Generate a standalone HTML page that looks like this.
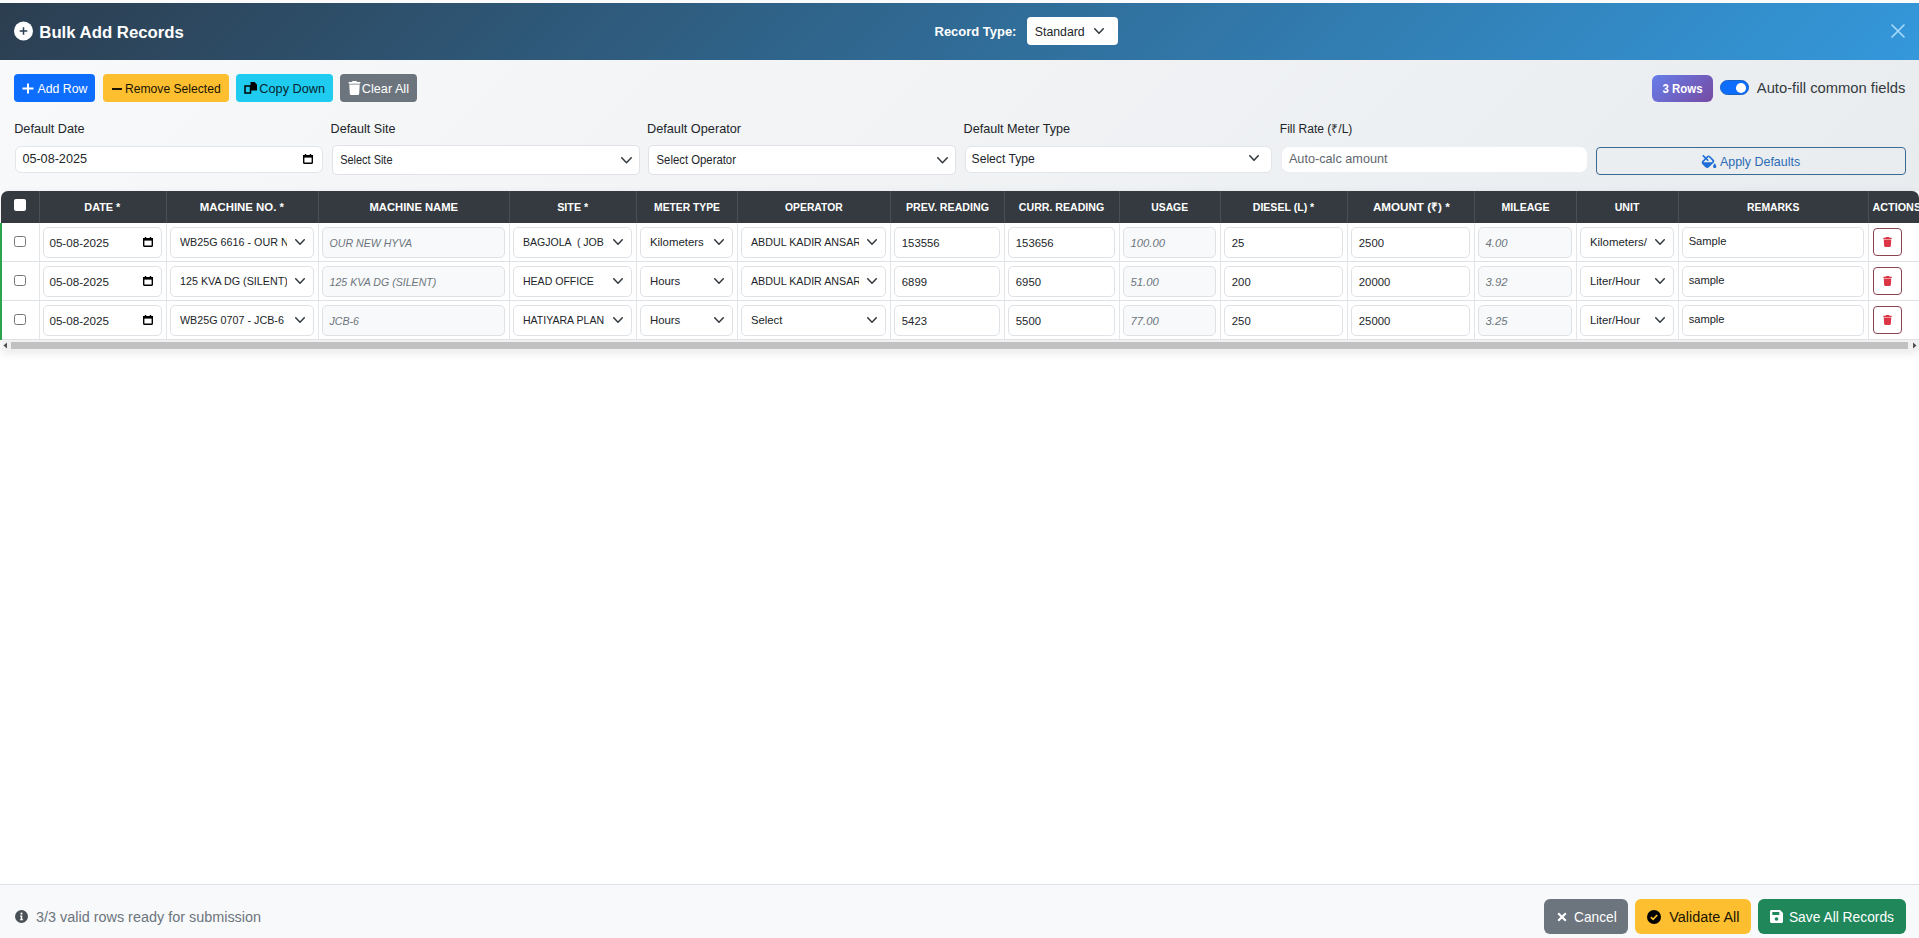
<!DOCTYPE html>
<html><head><meta charset="utf-8"><title>Bulk Add Records</title>
<style>
html,body{margin:0;padding:0;}
body{width:1919px;height:938px;overflow:hidden;position:relative;background:#fff;font-family:"Liberation Sans", sans-serif;}
.b{position:absolute;}
.t{position:absolute;white-space:nowrap;}
svg.b{display:block;}
</style></head><body>
<div class="b" style="left:0px;top:0px;width:1919px;height:3px;background:#fbfbfd;"></div>
<div class="b" style="left:0px;top:3px;width:1919px;height:57px;background:linear-gradient(135deg,#2c3e50 0%,#3498db 100%);"></div>
<svg class="b" style="left:14px;top:21px;" width="19" height="20" viewBox="0 0 19 20"><circle cx="9.5" cy="10" r="9.5" fill="#fff"/><path d="M9.5 6.2V13.8M5.7 10H13.3" stroke="#2c3e50" stroke-width="1.5"/></svg>
<div class="t" style="left:39.29px;top:23px;font-size:16.76px;line-height:20px;color:#fff;font-weight:700;">Bulk Add Records</div>
<div class="t" style="left:934.52px;top:22px;font-size:12.97px;line-height:20px;color:#fff;font-weight:700;">Record Type:</div>
<div class="b" style="left:1027px;top:17px;width:91px;height:28px;background:#fff;border-radius:4px;"></div>
<div class="t" style="left:1034.79px;top:22px;font-size:12.3px;line-height:20px;color:#212529;">Standard</div>
<svg class="b" style="left:1094px;top:28px;" width="10" height="6" viewBox="0 0 10 6"><path d="M0.75 0.75 L5.0 5.25 L9.25 0.75" fill="none" stroke="#343a40" stroke-width="1.5" stroke-linecap="round" stroke-linejoin="round"/></svg>
<svg class="b" style="left:1891px;top:24px;" width="14" height="14" viewBox="0 0 14 14"><path d="M1 1L13 13M13 1L1 13" stroke="#a8dcff" stroke-width="1.6" stroke-linecap="round"/></svg>
<div class="b" style="left:0px;top:60px;width:1919px;height:131px;background:linear-gradient(135deg,#f8f9fa 0%,#e9ecef 100%);"></div>
<div class="b" style="left:14px;top:74px;width:81px;height:28px;background:#0d6efd;border-radius:4px;"></div>
<svg class="b" style="left:22px;top:83px;" width="12" height="11" viewBox="0 0 12 11"><path d="M6 0.5V10.5M0.5 5.5H11.5" stroke="#fff" stroke-width="2"/></svg>
<div class="t" style="left:37.50px;top:79px;font-size:12.32px;line-height:20px;color:#fff;">Add Row</div>
<div class="b" style="left:103px;top:74px;width:126px;height:28px;background:#fdbf30;border-radius:4px;"></div>
<div class="b" style="left:111.5px;top:87.5px;width:10.0px;height:2.0px;background:#1a1400;"></div>
<div class="t" style="left:125.03px;top:79px;font-size:12.13px;line-height:20px;color:#1a1400;">Remove Selected</div>
<div class="b" style="left:236px;top:74px;width:97px;height:28px;background:#1fcbee;border-radius:4px;"></div>
<svg class="b" style="left:244px;top:82px;" width="13" height="12" viewBox="0 0 13 12"><path d="M1 4H6.5V11H1Z" fill="none" stroke="#000" stroke-width="1.5"/><path d="M6.5 0H10.5L13 2.5V8.5H6.5Z" fill="#000"/></svg>
<div class="t" style="left:259.37px;top:79px;font-size:12.7px;line-height:20px;color:#04262e;">Copy Down</div>
<div class="b" style="left:340px;top:74px;width:77px;height:28px;background:#6c757d;border-radius:4px;"></div>
<svg class="b" style="left:347.5px;top:81px;" width="13" height="14" viewBox="0 0 448 512"><path fill="#fff" d="M135.2 17.7L128 32H32C14.3 32 0 46.3 0 64S14.3 96 32 96H416c17.7 0 32-14.3 32-32s-14.3-32-32-32H320l-7.2-14.3C307.4 6.8 296.3 0 284.2 0H163.8c-12.1 0-23.2 6.8-28.6 17.7zM416 128H32L53.2 467c1.6 25.3 22.6 45 47.9 45H346.9c25.3 0 46.3-19.7 47.9-45L416 128z"/></svg>
<div class="t" style="left:361.87px;top:79px;font-size:12.67px;line-height:20px;color:#fff;">Clear All</div>
<div class="b" style="left:1652px;top:75px;width:61px;height:27px;background:linear-gradient(135deg,#667eea 0%,#764ba2 100%);border-radius:6px;"></div>
<div class="t" style="left:1662.57px;top:79px;font-size:11.45px;line-height:20px;color:#fff;transform:scaleY(1.1);transform-origin:0 14px;font-weight:700;">3 Rows</div>
<div class="b" style="left:1720px;top:80px;width:29px;height:15px;background:#0d6efd;border:1px solid #1862c4;box-sizing:border-box;border-radius:8px;"></div>
<div class="b" style="left:1735.5px;top:82.5px;width:10.5px;height:10.0px;background:#fff;border-radius:50%;"></div>
<div class="t" style="left:1756.80px;top:78px;font-size:14.78px;line-height:20px;color:#343a40;">Auto-fill common fields</div>
<div class="t" style="left:14.19px;top:119px;font-size:12.68px;line-height:20px;color:#212529;">Default Date</div>
<div class="t" style="left:330.60px;top:119px;font-size:12.55px;line-height:20px;color:#212529;">Default Site</div>
<div class="t" style="left:646.98px;top:119px;font-size:12.74px;line-height:20px;color:#212529;">Default Operator</div>
<div class="t" style="left:963.59px;top:119px;font-size:12.64px;line-height:20px;color:#212529;">Default Meter Type</div>
<div class="t" style="left:1279.84px;top:119px;font-size:12.04px;line-height:20px;color:#212529;">Fill Rate (&#8377;/L)</div>
<div class="b" style="left:14.5px;top:145.5px;width:308.5px;height:27.0px;background:#fff;border:1px solid #e2e5e9;border-radius:6px;box-sizing:border-box;"></div>
<div class="t" style="left:22.39px;top:149px;font-size:12.64px;line-height:20px;color:#212529;">05-08-2025</div>
<svg class="b" style="left:302.5px;top:154px;" width="10" height="10" viewBox="0 0 10 10"><rect x="0.7" y="1.7" width="8.6" height="7.6" rx="0.8" fill="none" stroke="#000" stroke-width="1.4"/><rect x="0" y="1" width="10" height="2.6" fill="#000"/><rect x="1.8" y="0" width="1.4" height="1.6" fill="#000"/><rect x="6.8" y="0" width="1.4" height="1.6" fill="#000"/></svg>
<div class="b" style="left:331.5px;top:145px;width:308.0px;height:29.5px;background:#fff;border:1px solid #e2e5e9;border-radius:6px;box-sizing:border-box;border-color:#dfe2e6;border-radius:5px;"></div>
<div class="t" style="left:340.15px;top:150px;font-size:10.96px;line-height:20px;color:#212529;transform:scaleY(1.12);transform-origin:0 14px;">Select Site</div>
<svg class="b" style="left:620.5px;top:157px;" width="11" height="6.5" viewBox="0 0 11 6.5"><path d="M0.75 0.75 L5.5 5.75 L10.25 0.75" fill="none" stroke="#343a40" stroke-width="1.5" stroke-linecap="round" stroke-linejoin="round"/></svg>
<div class="b" style="left:647.5px;top:145px;width:308.0px;height:29.5px;background:#fff;border:1px solid #e2e5e9;border-radius:6px;box-sizing:border-box;border-color:#dfe2e6;border-radius:5px;"></div>
<div class="t" style="left:656.53px;top:150px;font-size:11.35px;line-height:20px;color:#212529;transform:scaleY(1.08);transform-origin:0 14px;">Select Operator</div>
<svg class="b" style="left:937px;top:157px;" width="11" height="6.5" viewBox="0 0 11 6.5"><path d="M0.75 0.75 L5.5 5.75 L10.25 0.75" fill="none" stroke="#343a40" stroke-width="1.5" stroke-linecap="round" stroke-linejoin="round"/></svg>
<div class="b" style="left:964.5px;top:145.5px;width:307.5px;height:27.0px;background:#fff;border:1px solid #e2e5e9;border-radius:6px;box-sizing:border-box;"></div>
<div class="t" style="left:971.59px;top:149px;font-size:12.13px;line-height:20px;color:#212529;">Select Type</div>
<svg class="b" style="left:1249px;top:155px;" width="10" height="6" viewBox="0 0 10 6"><path d="M0.8 0.8 L5.0 5.2 L9.2 0.8" fill="none" stroke="#343a40" stroke-width="1.6" stroke-linecap="round" stroke-linejoin="round"/></svg>
<div class="b" style="left:1281px;top:145.5px;width:307px;height:27.0px;background:#fff;border:1px solid #e2e5e9;border-radius:6px;box-sizing:border-box;border-color:#eceef1;border-radius:8px;"></div>
<div class="t" style="left:1288.90px;top:149px;font-size:12.7px;line-height:20px;color:#5f666d;">Auto-calc amount</div>
<div class="b" style="left:1596px;top:147px;width:310px;height:28px;border:1px solid #3b6a96;border-radius:4px;box-sizing:border-box;"></div>
<svg class="b" style="left:1701px;top:155px;" width="16" height="13" viewBox="0 0 576 512"><path fill="#1f6fd6" d="M41.4 9.4C53.9-3.1 74.1-3.1 86.6 9.4L168 90.7l53.1-53.1c28.1-28.1 73.8-28.1 101.9 0L474.3 189.1c28.1 28.1 28.1 73.8 0 101.9L283.9 481.4c-37.5 37.5-98.3 37.5-135.8 0L30.6 363.9c-37.5-37.5-37.5-98.3 0-135.8L122.7 136 41.4 54.6c-12.5-12.5-12.5-32.8 0-45.3zm176 221.3L168 181.3 75.9 273.4c-4.2 4.2-7 9.3-8.4 14.6H386.7l42.2-42.2c3.1-3.1 3.1-8.2 0-11.3L277.7 82.9c-3.1-3.1-8.2-3.1-11.3 0L213.3 136l49.4 49.4c12.5 12.5 12.5 32.8 0 45.3s-32.8 12.5-45.3 0zM512 512c-35.3 0-64-28.7-64-64c0-25.2 32.6-79.6 51.2-108.7c6-9.4 19.5-9.4 25.5 0C543.4 368.4 576 422.8 576 448c0 35.3-28.7 64-64 64z"/></svg>
<div class="t" style="left:1720.00px;top:152px;font-size:12.43px;line-height:20px;color:#2a6cb5;">Apply Defaults</div>
<div class="b" style="left:1px;top:191px;width:1918px;height:159px;box-shadow:0 3px 10px rgba(0,0,0,0.09);border-radius:8px 8px 0 0;background:#fff;"></div>
<div class="b" style="left:1px;top:191px;width:1918px;height:32px;background:#343a40;border-radius:7px 7px 0 0;"></div>
<div class="b" style="left:39px;top:191px;width:1px;height:32px;background:#4a5057;"></div>
<div class="b" style="left:166px;top:191px;width:1px;height:32px;background:#4a5057;"></div>
<div class="b" style="left:318px;top:191px;width:1px;height:32px;background:#4a5057;"></div>
<div class="b" style="left:509px;top:191px;width:1px;height:32px;background:#4a5057;"></div>
<div class="b" style="left:636px;top:191px;width:1px;height:32px;background:#4a5057;"></div>
<div class="b" style="left:737px;top:191px;width:1px;height:32px;background:#4a5057;"></div>
<div class="b" style="left:890px;top:191px;width:1px;height:32px;background:#4a5057;"></div>
<div class="b" style="left:1004px;top:191px;width:1px;height:32px;background:#4a5057;"></div>
<div class="b" style="left:1119px;top:191px;width:1px;height:32px;background:#4a5057;"></div>
<div class="b" style="left:1220px;top:191px;width:1px;height:32px;background:#4a5057;"></div>
<div class="b" style="left:1347px;top:191px;width:1px;height:32px;background:#4a5057;"></div>
<div class="b" style="left:1474px;top:191px;width:1px;height:32px;background:#4a5057;"></div>
<div class="b" style="left:1576px;top:191px;width:1px;height:32px;background:#4a5057;"></div>
<div class="b" style="left:1678px;top:191px;width:1px;height:32px;background:#4a5057;"></div>
<div class="b" style="left:1868px;top:191px;width:1px;height:32px;background:#4a5057;"></div>
<div class="t" style="left:84.35px;top:197px;font-size:10.86px;line-height:20px;color:#fff;font-weight:700;">DATE *</div>
<div class="t" style="left:199.72px;top:197px;font-size:11.41px;line-height:20px;color:#fff;font-weight:700;">MACHINE NO. *</div>
<div class="t" style="left:369.53px;top:197px;font-size:11.23px;line-height:20px;color:#fff;font-weight:700;">MACHINE NAME</div>
<div class="t" style="left:557.18px;top:197px;font-size:10.77px;line-height:20px;color:#fff;font-weight:700;">SITE *</div>
<div class="t" style="left:654.08px;top:198px;font-size:10.32px;line-height:20px;color:#fff;font-weight:700;">METER TYPE</div>
<div class="t" style="left:785.09px;top:198px;font-size:10.34px;line-height:20px;color:#fff;font-weight:700;">OPERATOR</div>
<div class="t" style="left:905.96px;top:197px;font-size:10.65px;line-height:20px;color:#fff;font-weight:700;">PREV. READING</div>
<div class="t" style="left:1004px;width:115px;text-align:center;top:197px;font-size:10.6px;line-height:20px;color:#fff;font-weight:700;">CURR. READING</div>
<div class="t" style="left:1151.28px;top:198px;font-size:10.35px;line-height:20px;color:#fff;font-weight:700;">USAGE</div>
<div class="t" style="left:1252.77px;top:197px;font-size:10.57px;line-height:20px;color:#fff;font-weight:700;">DIESEL (L) *</div>
<div class="t" style="left:1372.95px;top:197px;font-size:11.64px;line-height:20px;color:#fff;font-weight:700;">AMOUNT (&#8377;) *</div>
<div class="t" style="left:1501.47px;top:197px;font-size:10.56px;line-height:20px;color:#fff;font-weight:700;">MILEAGE</div>
<div class="t" style="left:1576px;width:102px;text-align:center;top:197px;font-size:10.6px;line-height:20px;color:#fff;font-weight:700;">UNIT</div>
<div class="t" style="left:1747.08px;top:198px;font-size:10.36px;line-height:20px;color:#fff;font-weight:700;">REMARKS</div>
<div class="t" style="left:1872.50px;top:197px;font-size:10.8px;line-height:20px;color:#fff;font-weight:700;">ACTIONS</div>
<div class="b" style="left:14px;top:199px;width:12px;height:12px;background:#fff;border-radius:2px;"></div>
<div class="b" style="left:0px;top:223px;width:2px;height:117px;background:#2ea44f;"></div>
<div class="b" style="left:2px;top:261px;width:1917px;height:1px;background:#dee2e6;"></div>
<div class="b" style="left:39px;top:223px;width:1px;height:38px;background:#e3e6e9;"></div>
<div class="b" style="left:166px;top:223px;width:1px;height:38px;background:#e3e6e9;"></div>
<div class="b" style="left:318px;top:223px;width:1px;height:38px;background:#e3e6e9;"></div>
<div class="b" style="left:509px;top:223px;width:1px;height:38px;background:#e3e6e9;"></div>
<div class="b" style="left:636px;top:223px;width:1px;height:38px;background:#e3e6e9;"></div>
<div class="b" style="left:737px;top:223px;width:1px;height:38px;background:#e3e6e9;"></div>
<div class="b" style="left:890px;top:223px;width:1px;height:38px;background:#e3e6e9;"></div>
<div class="b" style="left:1004px;top:223px;width:1px;height:38px;background:#e3e6e9;"></div>
<div class="b" style="left:1119px;top:223px;width:1px;height:38px;background:#e3e6e9;"></div>
<div class="b" style="left:1220px;top:223px;width:1px;height:38px;background:#e3e6e9;"></div>
<div class="b" style="left:1347px;top:223px;width:1px;height:38px;background:#e3e6e9;"></div>
<div class="b" style="left:1474px;top:223px;width:1px;height:38px;background:#e3e6e9;"></div>
<div class="b" style="left:1576px;top:223px;width:1px;height:38px;background:#e3e6e9;"></div>
<div class="b" style="left:1678px;top:223px;width:1px;height:38px;background:#e3e6e9;"></div>
<div class="b" style="left:1868px;top:223px;width:1px;height:38px;background:#e3e6e9;"></div>
<div class="b" style="left:14px;top:235.8px;width:11.5px;height:11.5px;border:1px solid #767676;border-radius:2.5px;box-sizing:border-box;background:#fff;"></div>
<div class="b" style="left:43.3px;top:227px;width:118.50000000000001px;height:31px;background:#fff;border:1px solid #dee2e6;border-radius:5px;box-sizing:border-box;"></div>
<div class="t" style="left:49.42px;top:233px;font-size:11.65px;line-height:20px;color:#212529;">05-08-2025</div>
<svg class="b" style="left:143.1px;top:236.8px;" width="10" height="10" viewBox="0 0 10 10"><rect x="0.7" y="1.7" width="8.6" height="7.6" rx="0.8" fill="none" stroke="#000" stroke-width="1.4"/><rect x="0" y="1" width="10" height="2.6" fill="#000"/><rect x="1.8" y="0" width="1.4" height="1.6" fill="#000"/><rect x="6.8" y="0" width="1.4" height="1.6" fill="#000"/></svg>
<div class="b" style="left:170.3px;top:227px;width:143.5px;height:31px;background:#fff;border:1px solid #dee2e6;border-radius:5px;box-sizing:border-box;"></div>
<div class="t" style="left:179.96px;top:232px;font-size:10.75px;line-height:20px;color:#212529;width:107.3px;overflow:hidden;white-space:nowrap;transform:scaleY(1.051);transform-origin:0 14px;">WB25G 6616 - OUR N</div>
<svg class="b" style="left:295.3px;top:239px;" width="10" height="6" viewBox="0 0 10 6"><path d="M0.75 0.75 L5.0 5.25 L9.25 0.75" fill="none" stroke="#343a40" stroke-width="1.5" stroke-linecap="round" stroke-linejoin="round"/></svg>
<div class="b" style="left:322.3px;top:227px;width:182.5px;height:31px;background:#f8f9fa;border:1px solid #dee2e6;border-radius:5px;box-sizing:border-box;"></div>
<div class="t" style="left:329.57px;top:233px;font-size:10.6px;line-height:20px;color:#6c757d;transform:scaleY(1.066);transform-origin:0 14px;font-style:italic;">OUR NEW HYVA</div>
<div class="b" style="left:513.3px;top:227px;width:118.5px;height:31px;background:#fff;border:1px solid #dee2e6;border-radius:5px;box-sizing:border-box;"></div>
<div class="t" style="left:522.97px;top:232px;font-size:10.55px;line-height:20px;color:#212529;width:82.3px;overflow:hidden;white-space:nowrap;transform:scaleY(1.071);transform-origin:0 14px;">BAGJOLA &nbsp;( JOB</div>
<svg class="b" style="left:613.3px;top:239px;" width="10" height="6" viewBox="0 0 10 6"><path d="M0.75 0.75 L5.0 5.25 L9.25 0.75" fill="none" stroke="#343a40" stroke-width="1.5" stroke-linecap="round" stroke-linejoin="round"/></svg>
<div class="b" style="left:640.3px;top:227px;width:92.5px;height:31px;background:#fff;border:1px solid #dee2e6;border-radius:5px;box-sizing:border-box;"></div>
<div class="t" style="left:649.93px;top:232px;font-size:11.4px;line-height:20px;color:#212529;width:56.4px;overflow:hidden;white-space:nowrap;">Kilometers</div>
<svg class="b" style="left:714.3px;top:239px;" width="10" height="6" viewBox="0 0 10 6"><path d="M0.75 0.75 L5.0 5.25 L9.25 0.75" fill="none" stroke="#343a40" stroke-width="1.5" stroke-linecap="round" stroke-linejoin="round"/></svg>
<div class="b" style="left:741.3px;top:227px;width:144.5px;height:31px;background:#fff;border:1px solid #dee2e6;border-radius:5px;box-sizing:border-box;"></div>
<div class="t" style="left:750.97px;top:232px;font-size:10.7px;line-height:20px;color:#212529;width:108.3px;overflow:hidden;white-space:nowrap;transform:scaleY(1.056);transform-origin:0 14px;">ABDUL KADIR ANSAR</div>
<svg class="b" style="left:867.3px;top:239px;" width="10" height="6" viewBox="0 0 10 6"><path d="M0.75 0.75 L5.0 5.25 L9.25 0.75" fill="none" stroke="#343a40" stroke-width="1.5" stroke-linecap="round" stroke-linejoin="round"/></svg>
<div class="b" style="left:894.3px;top:227px;width:105.5px;height:31px;background:#fff;border:1px solid #dee2e6;border-radius:5px;box-sizing:border-box;"></div>
<div class="t" style="left:901.83px;top:233px;font-size:11.3px;line-height:20px;color:#212529;">153556</div>
<div class="b" style="left:1008.3px;top:227px;width:106.5px;height:31px;background:#fff;border:1px solid #dee2e6;border-radius:5px;box-sizing:border-box;"></div>
<div class="t" style="left:1015.83px;top:233px;font-size:11.3px;line-height:20px;color:#212529;">153656</div>
<div class="b" style="left:1123.3px;top:227px;width:92.5px;height:31px;background:#f8f9fa;border:1px solid #dee2e6;border-radius:5px;box-sizing:border-box;"></div>
<div class="t" style="left:1130.53px;top:233px;font-size:11.3px;line-height:20px;color:#6c757d;font-style:italic;">100.00</div>
<div class="b" style="left:1224.3px;top:227px;width:118.5px;height:31px;background:#fff;border:1px solid #dee2e6;border-radius:5px;box-sizing:border-box;"></div>
<div class="t" style="left:1231.83px;top:233px;font-size:11.3px;line-height:20px;color:#212529;">25</div>
<div class="b" style="left:1351.3px;top:227px;width:118.5px;height:31px;background:#fff;border:1px solid #dee2e6;border-radius:5px;box-sizing:border-box;"></div>
<div class="t" style="left:1358.83px;top:233px;font-size:11.3px;line-height:20px;color:#212529;">2500</div>
<div class="b" style="left:1478.3px;top:227px;width:93.5px;height:31px;background:#f8f9fa;border:1px solid #dee2e6;border-radius:5px;box-sizing:border-box;"></div>
<div class="t" style="left:1485.53px;top:233px;font-size:11.3px;line-height:20px;color:#6c757d;font-style:italic;">4.00</div>
<div class="b" style="left:1580.3px;top:227px;width:93.5px;height:31px;background:#fff;border:1px solid #dee2e6;border-radius:5px;box-sizing:border-box;"></div>
<div class="t" style="left:1589.93px;top:232px;font-size:11.4px;line-height:20px;color:#212529;width:57.4px;overflow:hidden;white-space:nowrap;">Kilometers/</div>
<svg class="b" style="left:1655.3px;top:239px;" width="10" height="6" viewBox="0 0 10 6"><path d="M0.75 0.75 L5.0 5.25 L9.25 0.75" fill="none" stroke="#343a40" stroke-width="1.5" stroke-linecap="round" stroke-linejoin="round"/></svg>
<div class="b" style="left:1682.3px;top:227px;width:181.5px;height:31px;background:#fff;border:1px solid #dee2e6;border-radius:5px;box-sizing:border-box;"></div>
<div class="t" style="left:1688.64px;top:231px;font-size:11.15px;line-height:20px;color:#212529;">Sample</div>
<div class="b" style="left:1873px;top:227.8px;width:29px;height:28.399999999999977px;border:1px solid #8c4450;border-radius:4px;box-sizing:border-box;"></div>
<svg class="b" style="left:1883px;top:237px;" width="9" height="10" viewBox="0 0 448 512"><path fill="#dc3545" d="M135.2 17.7L128 32H32C14.3 32 0 46.3 0 64S14.3 96 32 96H416c17.7 0 32-14.3 32-32s-14.3-32-32-32H320l-7.2-14.3C307.4 6.8 296.3 0 284.2 0H163.8c-12.1 0-23.2 6.8-28.6 17.7zM416 128H32L53.2 467c1.6 25.3 22.6 45 47.9 45H346.9c25.3 0 46.3-19.7 47.9-45L416 128z"/></svg>
<div class="b" style="left:2px;top:300px;width:1917px;height:1px;background:#dee2e6;"></div>
<div class="b" style="left:39px;top:262px;width:1px;height:38px;background:#e3e6e9;"></div>
<div class="b" style="left:166px;top:262px;width:1px;height:38px;background:#e3e6e9;"></div>
<div class="b" style="left:318px;top:262px;width:1px;height:38px;background:#e3e6e9;"></div>
<div class="b" style="left:509px;top:262px;width:1px;height:38px;background:#e3e6e9;"></div>
<div class="b" style="left:636px;top:262px;width:1px;height:38px;background:#e3e6e9;"></div>
<div class="b" style="left:737px;top:262px;width:1px;height:38px;background:#e3e6e9;"></div>
<div class="b" style="left:890px;top:262px;width:1px;height:38px;background:#e3e6e9;"></div>
<div class="b" style="left:1004px;top:262px;width:1px;height:38px;background:#e3e6e9;"></div>
<div class="b" style="left:1119px;top:262px;width:1px;height:38px;background:#e3e6e9;"></div>
<div class="b" style="left:1220px;top:262px;width:1px;height:38px;background:#e3e6e9;"></div>
<div class="b" style="left:1347px;top:262px;width:1px;height:38px;background:#e3e6e9;"></div>
<div class="b" style="left:1474px;top:262px;width:1px;height:38px;background:#e3e6e9;"></div>
<div class="b" style="left:1576px;top:262px;width:1px;height:38px;background:#e3e6e9;"></div>
<div class="b" style="left:1678px;top:262px;width:1px;height:38px;background:#e3e6e9;"></div>
<div class="b" style="left:1868px;top:262px;width:1px;height:38px;background:#e3e6e9;"></div>
<div class="b" style="left:14px;top:274.8px;width:11.5px;height:11.5px;border:1px solid #767676;border-radius:2.5px;box-sizing:border-box;background:#fff;"></div>
<div class="b" style="left:43.3px;top:266px;width:118.50000000000001px;height:31px;background:#fff;border:1px solid #dee2e6;border-radius:5px;box-sizing:border-box;"></div>
<div class="t" style="left:49.42px;top:272px;font-size:11.65px;line-height:20px;color:#212529;">05-08-2025</div>
<svg class="b" style="left:143.1px;top:275.8px;" width="10" height="10" viewBox="0 0 10 10"><rect x="0.7" y="1.7" width="8.6" height="7.6" rx="0.8" fill="none" stroke="#000" stroke-width="1.4"/><rect x="0" y="1" width="10" height="2.6" fill="#000"/><rect x="1.8" y="0" width="1.4" height="1.6" fill="#000"/><rect x="6.8" y="0" width="1.4" height="1.6" fill="#000"/></svg>
<div class="b" style="left:170.3px;top:266px;width:143.5px;height:31px;background:#fff;border:1px solid #dee2e6;border-radius:5px;box-sizing:border-box;"></div>
<div class="t" style="left:179.96px;top:271px;font-size:10.75px;line-height:20px;color:#212529;width:107.3px;overflow:hidden;white-space:nowrap;transform:scaleY(1.051);transform-origin:0 14px;">125 KVA DG (SILENT)</div>
<svg class="b" style="left:295.3px;top:278px;" width="10" height="6" viewBox="0 0 10 6"><path d="M0.75 0.75 L5.0 5.25 L9.25 0.75" fill="none" stroke="#343a40" stroke-width="1.5" stroke-linecap="round" stroke-linejoin="round"/></svg>
<div class="b" style="left:322.3px;top:266px;width:182.5px;height:31px;background:#f8f9fa;border:1px solid #dee2e6;border-radius:5px;box-sizing:border-box;"></div>
<div class="t" style="left:329.57px;top:272px;font-size:10.6px;line-height:20px;color:#6c757d;transform:scaleY(1.066);transform-origin:0 14px;font-style:italic;">125 KVA DG (SILENT)</div>
<div class="b" style="left:513.3px;top:266px;width:118.5px;height:31px;background:#fff;border:1px solid #dee2e6;border-radius:5px;box-sizing:border-box;"></div>
<div class="t" style="left:522.97px;top:271px;font-size:10.55px;line-height:20px;color:#212529;width:82.3px;overflow:hidden;white-space:nowrap;transform:scaleY(1.071);transform-origin:0 14px;">HEAD OFFICE</div>
<svg class="b" style="left:613.3px;top:278px;" width="10" height="6" viewBox="0 0 10 6"><path d="M0.75 0.75 L5.0 5.25 L9.25 0.75" fill="none" stroke="#343a40" stroke-width="1.5" stroke-linecap="round" stroke-linejoin="round"/></svg>
<div class="b" style="left:640.3px;top:266px;width:92.5px;height:31px;background:#fff;border:1px solid #dee2e6;border-radius:5px;box-sizing:border-box;"></div>
<div class="t" style="left:649.93px;top:271px;font-size:11.4px;line-height:20px;color:#212529;width:56.4px;overflow:hidden;white-space:nowrap;">Hours</div>
<svg class="b" style="left:714.3px;top:278px;" width="10" height="6" viewBox="0 0 10 6"><path d="M0.75 0.75 L5.0 5.25 L9.25 0.75" fill="none" stroke="#343a40" stroke-width="1.5" stroke-linecap="round" stroke-linejoin="round"/></svg>
<div class="b" style="left:741.3px;top:266px;width:144.5px;height:31px;background:#fff;border:1px solid #dee2e6;border-radius:5px;box-sizing:border-box;"></div>
<div class="t" style="left:750.97px;top:271px;font-size:10.7px;line-height:20px;color:#212529;width:108.3px;overflow:hidden;white-space:nowrap;transform:scaleY(1.056);transform-origin:0 14px;">ABDUL KADIR ANSAR</div>
<svg class="b" style="left:867.3px;top:278px;" width="10" height="6" viewBox="0 0 10 6"><path d="M0.75 0.75 L5.0 5.25 L9.25 0.75" fill="none" stroke="#343a40" stroke-width="1.5" stroke-linecap="round" stroke-linejoin="round"/></svg>
<div class="b" style="left:894.3px;top:266px;width:105.5px;height:31px;background:#fff;border:1px solid #dee2e6;border-radius:5px;box-sizing:border-box;"></div>
<div class="t" style="left:901.83px;top:272px;font-size:11.3px;line-height:20px;color:#212529;">6899</div>
<div class="b" style="left:1008.3px;top:266px;width:106.5px;height:31px;background:#fff;border:1px solid #dee2e6;border-radius:5px;box-sizing:border-box;"></div>
<div class="t" style="left:1015.83px;top:272px;font-size:11.3px;line-height:20px;color:#212529;">6950</div>
<div class="b" style="left:1123.3px;top:266px;width:92.5px;height:31px;background:#f8f9fa;border:1px solid #dee2e6;border-radius:5px;box-sizing:border-box;"></div>
<div class="t" style="left:1130.53px;top:272px;font-size:11.3px;line-height:20px;color:#6c757d;font-style:italic;">51.00</div>
<div class="b" style="left:1224.3px;top:266px;width:118.5px;height:31px;background:#fff;border:1px solid #dee2e6;border-radius:5px;box-sizing:border-box;"></div>
<div class="t" style="left:1231.83px;top:272px;font-size:11.3px;line-height:20px;color:#212529;">200</div>
<div class="b" style="left:1351.3px;top:266px;width:118.5px;height:31px;background:#fff;border:1px solid #dee2e6;border-radius:5px;box-sizing:border-box;"></div>
<div class="t" style="left:1358.83px;top:272px;font-size:11.3px;line-height:20px;color:#212529;">20000</div>
<div class="b" style="left:1478.3px;top:266px;width:93.5px;height:31px;background:#f8f9fa;border:1px solid #dee2e6;border-radius:5px;box-sizing:border-box;"></div>
<div class="t" style="left:1485.53px;top:272px;font-size:11.3px;line-height:20px;color:#6c757d;font-style:italic;">3.92</div>
<div class="b" style="left:1580.3px;top:266px;width:93.5px;height:31px;background:#fff;border:1px solid #dee2e6;border-radius:5px;box-sizing:border-box;"></div>
<div class="t" style="left:1589.93px;top:271px;font-size:11.4px;line-height:20px;color:#212529;width:57.4px;overflow:hidden;white-space:nowrap;">Liter/Hour</div>
<svg class="b" style="left:1655.3px;top:278px;" width="10" height="6" viewBox="0 0 10 6"><path d="M0.75 0.75 L5.0 5.25 L9.25 0.75" fill="none" stroke="#343a40" stroke-width="1.5" stroke-linecap="round" stroke-linejoin="round"/></svg>
<div class="b" style="left:1682.3px;top:266px;width:181.5px;height:31px;background:#fff;border:1px solid #dee2e6;border-radius:5px;box-sizing:border-box;"></div>
<div class="t" style="left:1688.64px;top:270px;font-size:11.15px;line-height:20px;color:#212529;">sample</div>
<div class="b" style="left:1873px;top:266.8px;width:29px;height:28.399999999999977px;border:1px solid #8c4450;border-radius:4px;box-sizing:border-box;"></div>
<svg class="b" style="left:1883px;top:276px;" width="9" height="10" viewBox="0 0 448 512"><path fill="#dc3545" d="M135.2 17.7L128 32H32C14.3 32 0 46.3 0 64S14.3 96 32 96H416c17.7 0 32-14.3 32-32s-14.3-32-32-32H320l-7.2-14.3C307.4 6.8 296.3 0 284.2 0H163.8c-12.1 0-23.2 6.8-28.6 17.7zM416 128H32L53.2 467c1.6 25.3 22.6 45 47.9 45H346.9c25.3 0 46.3-19.7 47.9-45L416 128z"/></svg>
<div class="b" style="left:2px;top:339px;width:1917px;height:1px;background:#dee2e6;"></div>
<div class="b" style="left:39px;top:301px;width:1px;height:38px;background:#e3e6e9;"></div>
<div class="b" style="left:166px;top:301px;width:1px;height:38px;background:#e3e6e9;"></div>
<div class="b" style="left:318px;top:301px;width:1px;height:38px;background:#e3e6e9;"></div>
<div class="b" style="left:509px;top:301px;width:1px;height:38px;background:#e3e6e9;"></div>
<div class="b" style="left:636px;top:301px;width:1px;height:38px;background:#e3e6e9;"></div>
<div class="b" style="left:737px;top:301px;width:1px;height:38px;background:#e3e6e9;"></div>
<div class="b" style="left:890px;top:301px;width:1px;height:38px;background:#e3e6e9;"></div>
<div class="b" style="left:1004px;top:301px;width:1px;height:38px;background:#e3e6e9;"></div>
<div class="b" style="left:1119px;top:301px;width:1px;height:38px;background:#e3e6e9;"></div>
<div class="b" style="left:1220px;top:301px;width:1px;height:38px;background:#e3e6e9;"></div>
<div class="b" style="left:1347px;top:301px;width:1px;height:38px;background:#e3e6e9;"></div>
<div class="b" style="left:1474px;top:301px;width:1px;height:38px;background:#e3e6e9;"></div>
<div class="b" style="left:1576px;top:301px;width:1px;height:38px;background:#e3e6e9;"></div>
<div class="b" style="left:1678px;top:301px;width:1px;height:38px;background:#e3e6e9;"></div>
<div class="b" style="left:1868px;top:301px;width:1px;height:38px;background:#e3e6e9;"></div>
<div class="b" style="left:14px;top:313.8px;width:11.5px;height:11.5px;border:1px solid #767676;border-radius:2.5px;box-sizing:border-box;background:#fff;"></div>
<div class="b" style="left:43.3px;top:305px;width:118.50000000000001px;height:31px;background:#fff;border:1px solid #dee2e6;border-radius:5px;box-sizing:border-box;"></div>
<div class="t" style="left:49.42px;top:311px;font-size:11.65px;line-height:20px;color:#212529;">05-08-2025</div>
<svg class="b" style="left:143.1px;top:314.8px;" width="10" height="10" viewBox="0 0 10 10"><rect x="0.7" y="1.7" width="8.6" height="7.6" rx="0.8" fill="none" stroke="#000" stroke-width="1.4"/><rect x="0" y="1" width="10" height="2.6" fill="#000"/><rect x="1.8" y="0" width="1.4" height="1.6" fill="#000"/><rect x="6.8" y="0" width="1.4" height="1.6" fill="#000"/></svg>
<div class="b" style="left:170.3px;top:305px;width:143.5px;height:31px;background:#fff;border:1px solid #dee2e6;border-radius:5px;box-sizing:border-box;"></div>
<div class="t" style="left:179.96px;top:310px;font-size:10.75px;line-height:20px;color:#212529;width:107.3px;overflow:hidden;white-space:nowrap;transform:scaleY(1.051);transform-origin:0 14px;">WB25G 0707 - JCB-6</div>
<svg class="b" style="left:295.3px;top:317px;" width="10" height="6" viewBox="0 0 10 6"><path d="M0.75 0.75 L5.0 5.25 L9.25 0.75" fill="none" stroke="#343a40" stroke-width="1.5" stroke-linecap="round" stroke-linejoin="round"/></svg>
<div class="b" style="left:322.3px;top:305px;width:182.5px;height:31px;background:#f8f9fa;border:1px solid #dee2e6;border-radius:5px;box-sizing:border-box;"></div>
<div class="t" style="left:329.57px;top:311px;font-size:10.6px;line-height:20px;color:#6c757d;transform:scaleY(1.066);transform-origin:0 14px;font-style:italic;">JCB-6</div>
<div class="b" style="left:513.3px;top:305px;width:118.5px;height:31px;background:#fff;border:1px solid #dee2e6;border-radius:5px;box-sizing:border-box;"></div>
<div class="t" style="left:522.97px;top:310px;font-size:10.55px;line-height:20px;color:#212529;width:82.3px;overflow:hidden;white-space:nowrap;transform:scaleY(1.071);transform-origin:0 14px;">HATIYARA PLAN</div>
<svg class="b" style="left:613.3px;top:317px;" width="10" height="6" viewBox="0 0 10 6"><path d="M0.75 0.75 L5.0 5.25 L9.25 0.75" fill="none" stroke="#343a40" stroke-width="1.5" stroke-linecap="round" stroke-linejoin="round"/></svg>
<div class="b" style="left:640.3px;top:305px;width:92.5px;height:31px;background:#fff;border:1px solid #dee2e6;border-radius:5px;box-sizing:border-box;"></div>
<div class="t" style="left:649.93px;top:310px;font-size:11.4px;line-height:20px;color:#212529;width:56.4px;overflow:hidden;white-space:nowrap;">Hours</div>
<svg class="b" style="left:714.3px;top:317px;" width="10" height="6" viewBox="0 0 10 6"><path d="M0.75 0.75 L5.0 5.25 L9.25 0.75" fill="none" stroke="#343a40" stroke-width="1.5" stroke-linecap="round" stroke-linejoin="round"/></svg>
<div class="b" style="left:741.3px;top:305px;width:144.5px;height:31px;background:#fff;border:1px solid #dee2e6;border-radius:5px;box-sizing:border-box;"></div>
<div class="t" style="left:750.93px;top:310px;font-size:11.3px;line-height:20px;color:#212529;width:108.4px;overflow:hidden;white-space:nowrap;">Select</div>
<svg class="b" style="left:867.3px;top:317px;" width="10" height="6" viewBox="0 0 10 6"><path d="M0.75 0.75 L5.0 5.25 L9.25 0.75" fill="none" stroke="#343a40" stroke-width="1.5" stroke-linecap="round" stroke-linejoin="round"/></svg>
<div class="b" style="left:894.3px;top:305px;width:105.5px;height:31px;background:#fff;border:1px solid #dee2e6;border-radius:5px;box-sizing:border-box;"></div>
<div class="t" style="left:901.83px;top:311px;font-size:11.3px;line-height:20px;color:#212529;">5423</div>
<div class="b" style="left:1008.3px;top:305px;width:106.5px;height:31px;background:#fff;border:1px solid #dee2e6;border-radius:5px;box-sizing:border-box;"></div>
<div class="t" style="left:1015.83px;top:311px;font-size:11.3px;line-height:20px;color:#212529;">5500</div>
<div class="b" style="left:1123.3px;top:305px;width:92.5px;height:31px;background:#f8f9fa;border:1px solid #dee2e6;border-radius:5px;box-sizing:border-box;"></div>
<div class="t" style="left:1130.53px;top:311px;font-size:11.3px;line-height:20px;color:#6c757d;font-style:italic;">77.00</div>
<div class="b" style="left:1224.3px;top:305px;width:118.5px;height:31px;background:#fff;border:1px solid #dee2e6;border-radius:5px;box-sizing:border-box;"></div>
<div class="t" style="left:1231.83px;top:311px;font-size:11.3px;line-height:20px;color:#212529;">250</div>
<div class="b" style="left:1351.3px;top:305px;width:118.5px;height:31px;background:#fff;border:1px solid #dee2e6;border-radius:5px;box-sizing:border-box;"></div>
<div class="t" style="left:1358.83px;top:311px;font-size:11.3px;line-height:20px;color:#212529;">25000</div>
<div class="b" style="left:1478.3px;top:305px;width:93.5px;height:31px;background:#f8f9fa;border:1px solid #dee2e6;border-radius:5px;box-sizing:border-box;"></div>
<div class="t" style="left:1485.53px;top:311px;font-size:11.3px;line-height:20px;color:#6c757d;font-style:italic;">3.25</div>
<div class="b" style="left:1580.3px;top:305px;width:93.5px;height:31px;background:#fff;border:1px solid #dee2e6;border-radius:5px;box-sizing:border-box;"></div>
<div class="t" style="left:1589.93px;top:310px;font-size:11.4px;line-height:20px;color:#212529;width:57.4px;overflow:hidden;white-space:nowrap;">Liter/Hour</div>
<svg class="b" style="left:1655.3px;top:317px;" width="10" height="6" viewBox="0 0 10 6"><path d="M0.75 0.75 L5.0 5.25 L9.25 0.75" fill="none" stroke="#343a40" stroke-width="1.5" stroke-linecap="round" stroke-linejoin="round"/></svg>
<div class="b" style="left:1682.3px;top:305px;width:181.5px;height:31px;background:#fff;border:1px solid #dee2e6;border-radius:5px;box-sizing:border-box;"></div>
<div class="t" style="left:1688.64px;top:309px;font-size:11.15px;line-height:20px;color:#212529;">sample</div>
<div class="b" style="left:1873px;top:305.8px;width:29px;height:28.399999999999977px;border:1px solid #8c4450;border-radius:4px;box-sizing:border-box;"></div>
<svg class="b" style="left:1883px;top:315px;" width="9" height="10" viewBox="0 0 448 512"><path fill="#dc3545" d="M135.2 17.7L128 32H32C14.3 32 0 46.3 0 64S14.3 96 32 96H416c17.7 0 32-14.3 32-32s-14.3-32-32-32H320l-7.2-14.3C307.4 6.8 296.3 0 284.2 0H163.8c-12.1 0-23.2 6.8-28.6 17.7zM416 128H32L53.2 467c1.6 25.3 22.6 45 47.9 45H346.9c25.3 0 46.3-19.7 47.9-45L416 128z"/></svg>
<div class="b" style="left:2px;top:340px;width:1917px;height:10px;background:#f1f1f1;"></div>
<div class="b" style="left:11px;top:342px;width:1897px;height:7px;background:#c1c1c1;"></div>
<svg class="b" style="left:3px;top:342px;" width="5" height="7" viewBox="0 0 5 7"><path d="M4 0.5L0.5 3.5L4 6.5Z" fill="#505050"/></svg>
<svg class="b" style="left:1912px;top:342px;" width="5" height="7" viewBox="0 0 5 7"><path d="M1 0.5L4.5 3.5L1 6.5Z" fill="#505050"/></svg>
<div class="b" style="left:0px;top:884px;width:1919px;height:1px;background:#dee2e6;"></div>
<div class="b" style="left:0px;top:885px;width:1919px;height:53px;background:#f8f9fa;"></div>
<svg class="b" style="left:15px;top:910px;" width="13" height="13" viewBox="0 0 13 13"><circle cx="6.5" cy="6.5" r="6.5" fill="#495057"/><circle cx="6.5" cy="3.6" r="1.1" fill="#fff"/><path d="M5 5.6H7.3V9.3H8.1V10.2H4.9V9.3H5.7V6.5H5Z" fill="#fff"/></svg>
<div class="t" style="left:36.02px;top:907px;font-size:14.41px;line-height:20px;color:#6c757d;">3/3 valid rows ready for submission</div>
<div class="b" style="left:1544px;top:899px;width:84px;height:35px;background:#6c757d;border-radius:6px;"></div>
<svg class="b" style="left:1557px;top:912px;" width="10" height="10" viewBox="0 0 10 10"><path d="M1.2 1.2L8.8 8.8M8.8 1.2L1.2 8.8" stroke="#fff" stroke-width="2.2"/></svg>
<div class="t" style="left:1574.01px;top:908px;font-size:13.73px;line-height:20px;color:#fff;">Cancel</div>
<div class="b" style="left:1635px;top:899px;width:116px;height:35px;background:#fdbf30;border-radius:6px;"></div>
<svg class="b" style="left:1647px;top:910px;" width="14" height="14" viewBox="0 0 14 14"><circle cx="7" cy="7" r="7" fill="#000"/><path d="M3.9 7.2L6.1 9.3L10.2 5" fill="none" stroke="#fdbf30" stroke-width="1.8"/></svg>
<div class="t" style="left:1669.20px;top:907px;font-size:14.41px;line-height:20px;color:#1a1400;">Validate All</div>
<div class="b" style="left:1758px;top:899px;width:148px;height:35px;background:#1f875a;border-radius:6px;"></div>
<svg class="b" style="left:1769.5px;top:910px;" width="13" height="13" viewBox="0 0 13 13"><path d="M0 1.5C0 .7.7 0 1.5 0H10L13 3V11.5C13 12.3 12.3 13 11.5 13H1.5C.7 13 0 12.3 0 11.5Z" fill="#fff"/><rect x="2.3" y="2" width="7" height="3" fill="#1f875a"/><circle cx="6.5" cy="9" r="1.8" fill="#1f875a"/></svg>
<div class="t" style="left:1788.91px;top:908px;font-size:13.8px;line-height:20px;color:#fff;">Save All Records</div>
</body></html>
